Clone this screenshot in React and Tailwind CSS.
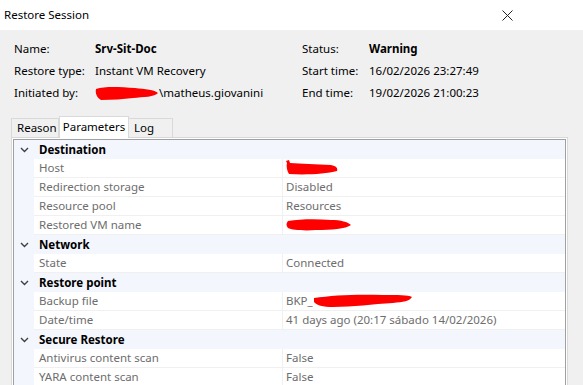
import React from "react";

const Scribble = ({ w, h, d }) => (
  <svg width={w} height={h} viewBox={`0 0 ${w} ${h}`} className="inline-block shrink-0">
    <path d={d} fill="#ff0000" />
  </svg>
);

const Chevron = () => (
  <svg width="9" height="6" viewBox="0 0 9 6">
    <path d="M1 1 L4.5 4.5 L8 1" fill="none" stroke="#404040" strokeWidth="1.4" />
  </svg>
);

const Header = ({ children }) => (
  <div className="flex h-[19px] bg-[#f3f6fc] items-center">
    <div className="w-[20px] flex justify-center pl-[1px]">
      <Chevron />
    </div>
    <div className="pl-[5px] font-bold text-black">{children}</div>
  </div>
);

const Row = ({ label, children }) => (
  <div className="flex h-[19px] bg-[#f3f6fc]">
    <div className="w-[20px]" />
    <div className="flex flex-1 bg-white border-b border-[#f0f0f0]">
      <div className="w-[248px] pl-[5px] flex items-center text-[#6d6d6d]">{label}</div>
      <div className="flex-1 border-l border-[#f0f0f0] pl-[3px] flex items-center text-[#6d6d6d]">{children}</div>
    </div>
  </div>
);

export default function App() {
  return (
    <div
      className="w-[583px] h-[385px] bg-[#f0f0f0] overflow-hidden text-[11.5px] leading-none text-black"
      style={{ fontFamily: '"Segoe UI", "Noto Sans", sans-serif' }}
    >
      <div className="h-[30px] bg-white flex items-center justify-between pl-[4px] pr-[70px]">
        <span>Restore Session</span>
        <svg width="11" height="11" viewBox="0 0 11 11">
          <path d="M0.5 0.5 L10.5 10.5 M10.5 0.5 L0.5 10.5" stroke="#222" strokeWidth="1" />
        </svg>
      </div>

      <div className="pt-[8px] pl-[14px] flex">
        <div className="w-[81px] flex flex-col">
          <div className="h-[22px] flex items-center">Name:</div>
          <div className="h-[22px] flex items-center">Restore type:</div>
          <div className="h-[22px] flex items-center">Initiated by:</div>
        </div>
        <div className="w-[207px] flex flex-col">
          <div className="h-[22px] flex items-center font-bold">Srv-Sit-Doc</div>
          <div className="h-[22px] flex items-center">Instant VM Recovery</div>
          <div className="h-[22px] flex items-center">
            <Scribble
              w={64}
              h={16}
              d="M1 4 C10 1 25 2 40 3 C50 4 60 5 63 8 C60 12 48 12 38 13 C28 14 18 15 6 15 C2 13 0 8 1 4 Z"
            />
            <span>\matheus.giovanini</span>
          </div>
        </div>
        <div className="w-[67px] flex flex-col">
          <div className="h-[22px] flex items-center">Status:</div>
          <div className="h-[22px] flex items-center">Start time:</div>
          <div className="h-[22px] flex items-center">End time:</div>
        </div>
        <div className="flex flex-col">
          <div className="h-[22px] flex items-center font-bold">Warning</div>
          <div className="h-[22px] flex items-center">16/02/2026 23:27:49</div>
          <div className="h-[22px] flex items-center">19/02/2026 21:00:23</div>
        </div>
      </div>

      <div className="mt-[11px] pl-[11px] flex items-end h-[22px]">
        <div className="w-[48px] h-[19px] border border-b-0 border-[#d9d9d9] bg-[#f0f0f0] flex items-center pl-[5px]">
          Reason
        </div>
        <div className="w-[70px] h-[22px] border border-b-0 border-[#d9d9d9] bg-white flex items-center justify-center -mb-px relative pb-[2px]">
          Parameters
        </div>
        <div className="w-[44px] h-[19px] border border-b-0 border-l-0 border-[#d9d9d9] bg-[#f0f0f0] flex items-center pl-[5px]">
          Log
        </div>
      </div>

      <div className="ml-[11px] w-[557px] h-[300px] border border-[#d9d9d9] bg-white p-px">
        <div className="h-full border border-[#a0a0a0] bg-white flex flex-col">
          <Header>Destination</Header>
          <Row label="Host">
            <Scribble w={52} h={16} d="M0 1 L3 0 L4 3 C15 4 30 4 45 5 C50 6 52 8 51 11 C40 14 20 15 3 14 C1 11 0 6 1 3 Z" />
          </Row>
          <Row label="Redirection storage">Disabled</Row>
          <Row label="Resource pool">Resources</Row>
          <Row label="Restored VM name">
            <Scribble w={66} h={14} d="M2 3 C15 1 30 1 45 2 C55 2 62 4 65 7 C60 11 45 12 30 12 C18 13 6 12 2 10 C0 8 0 5 2 3 Z" />
          </Row>
          <Header>Network</Header>
          <Row label="State">Connected</Row>
          <Header>Restore point</Header>
          <Row label="Backup file">
            <span>BKP_</span>
            <Scribble w={100} h={16} d="M1 5 C20 2 45 1 70 2 C85 2 95 2 99 4 C97 8 90 9 80 10 C60 11 40 14 20 14 C10 14 3 12 1 9 Z" />
          </Row>
          <Row label="Date/time">41 days ago (20:17 sábado 14/02/2026)</Row>
          <Header>Secure Restore</Header>
          <Row label="Antivirus content scan">False</Row>
          <Row label="YARA content scan">False</Row>
        </div>
      </div>
    </div>
  );
}
